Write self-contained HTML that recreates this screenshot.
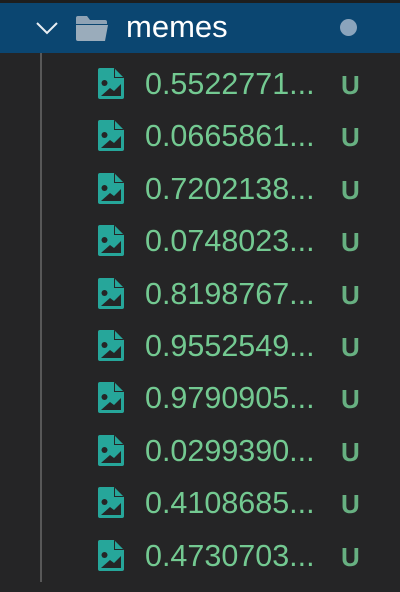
<!DOCTYPE html>
<html><head><style>
body{margin:0;width:400px;height:590px;background:#252526;overflow:hidden;font-family:"Liberation Sans",Arial,sans-serif;position:relative}
.top{position:absolute;left:0;top:0;width:400px;height:3px;background:#1e1e1e}
.bar{position:absolute;left:0;top:3px;width:400px;height:50px;background:#0b4671}
.line{position:absolute;left:40px;top:53px;width:2px;height:529px;background:#585858}
.row{position:absolute;left:0;width:400px;height:52px}
.row svg{position:absolute;left:98px;top:0}
.name{position:absolute;left:145px;top:-1px;font-size:30.5px;color:#73c991;line-height:34px}
.u{position:absolute;left:341px;top:0px;font-size:26px;font-weight:bold;color:#73c991;opacity:.85;line-height:34px}
</style></head><body>
<div class="top"></div>
<div class="bar">
<svg style="position:absolute;left:35px;top:18px" width="24" height="14" viewBox="0 0 24 14"><path d="M2 2 L12 12 L22 2" fill="none" stroke="#e8eef4" stroke-width="2"/></svg>
<svg style="position:absolute;left:75px;top:12px" width="34" height="28" viewBox="0 0 34 28"><path d="M1 3 Q1 1 3 1 H12 L15 5 H30 Q32 5 32 7 V9 H1 Z" fill="#8fa3b5"/><path d="M1 10 H33 L30 26 H3 Q1 26 1 24 Z" fill="#9aacbb"/></svg>
<div style="position:absolute;left:126px;top:6px;font-size:31px;color:#fff;line-height:36px">memes</div>
<div style="position:absolute;left:340px;top:16px;width:17px;height:17px;border-radius:50%;background:#8ba4bc"></div>
</div>
<div class="line"></div>
<div id="rows"></div>
<script>
var n=["0.5522771","0.0665861","0.7202138","0.0748023","0.8198767","0.9552549","0.9790905","0.0299390","0.4108685","0.4730703"];
var h="";
for(var i=0;i<10;i++){var y=68+i*52.4;
h+='<div class="row" style="top:'+y+'px"><svg width="26" height="31" viewBox="0 0 26 31"><path d="M2 0 H16 L26 10 V29 Q26 31 24 31 H2 Q0 31 0 29 V2 Q0 0 2 0 Z" fill="#26a69a"/><path d="M16 0 V10 H26 Z" fill="#252526"/><path d="M17 1 L25 9 H17 Z" fill="#26a69a"/><circle cx="6.5" cy="15" r="3" fill="#252526"/><path d="M3 28 L12 20 L16 23 L23 16 V28 Z" fill="#252526"/></svg><div class="name">'+n[i]+'...</div><div class="u">U</div></div>';}
document.getElementById("rows").innerHTML=h;
</script>
</body></html>
